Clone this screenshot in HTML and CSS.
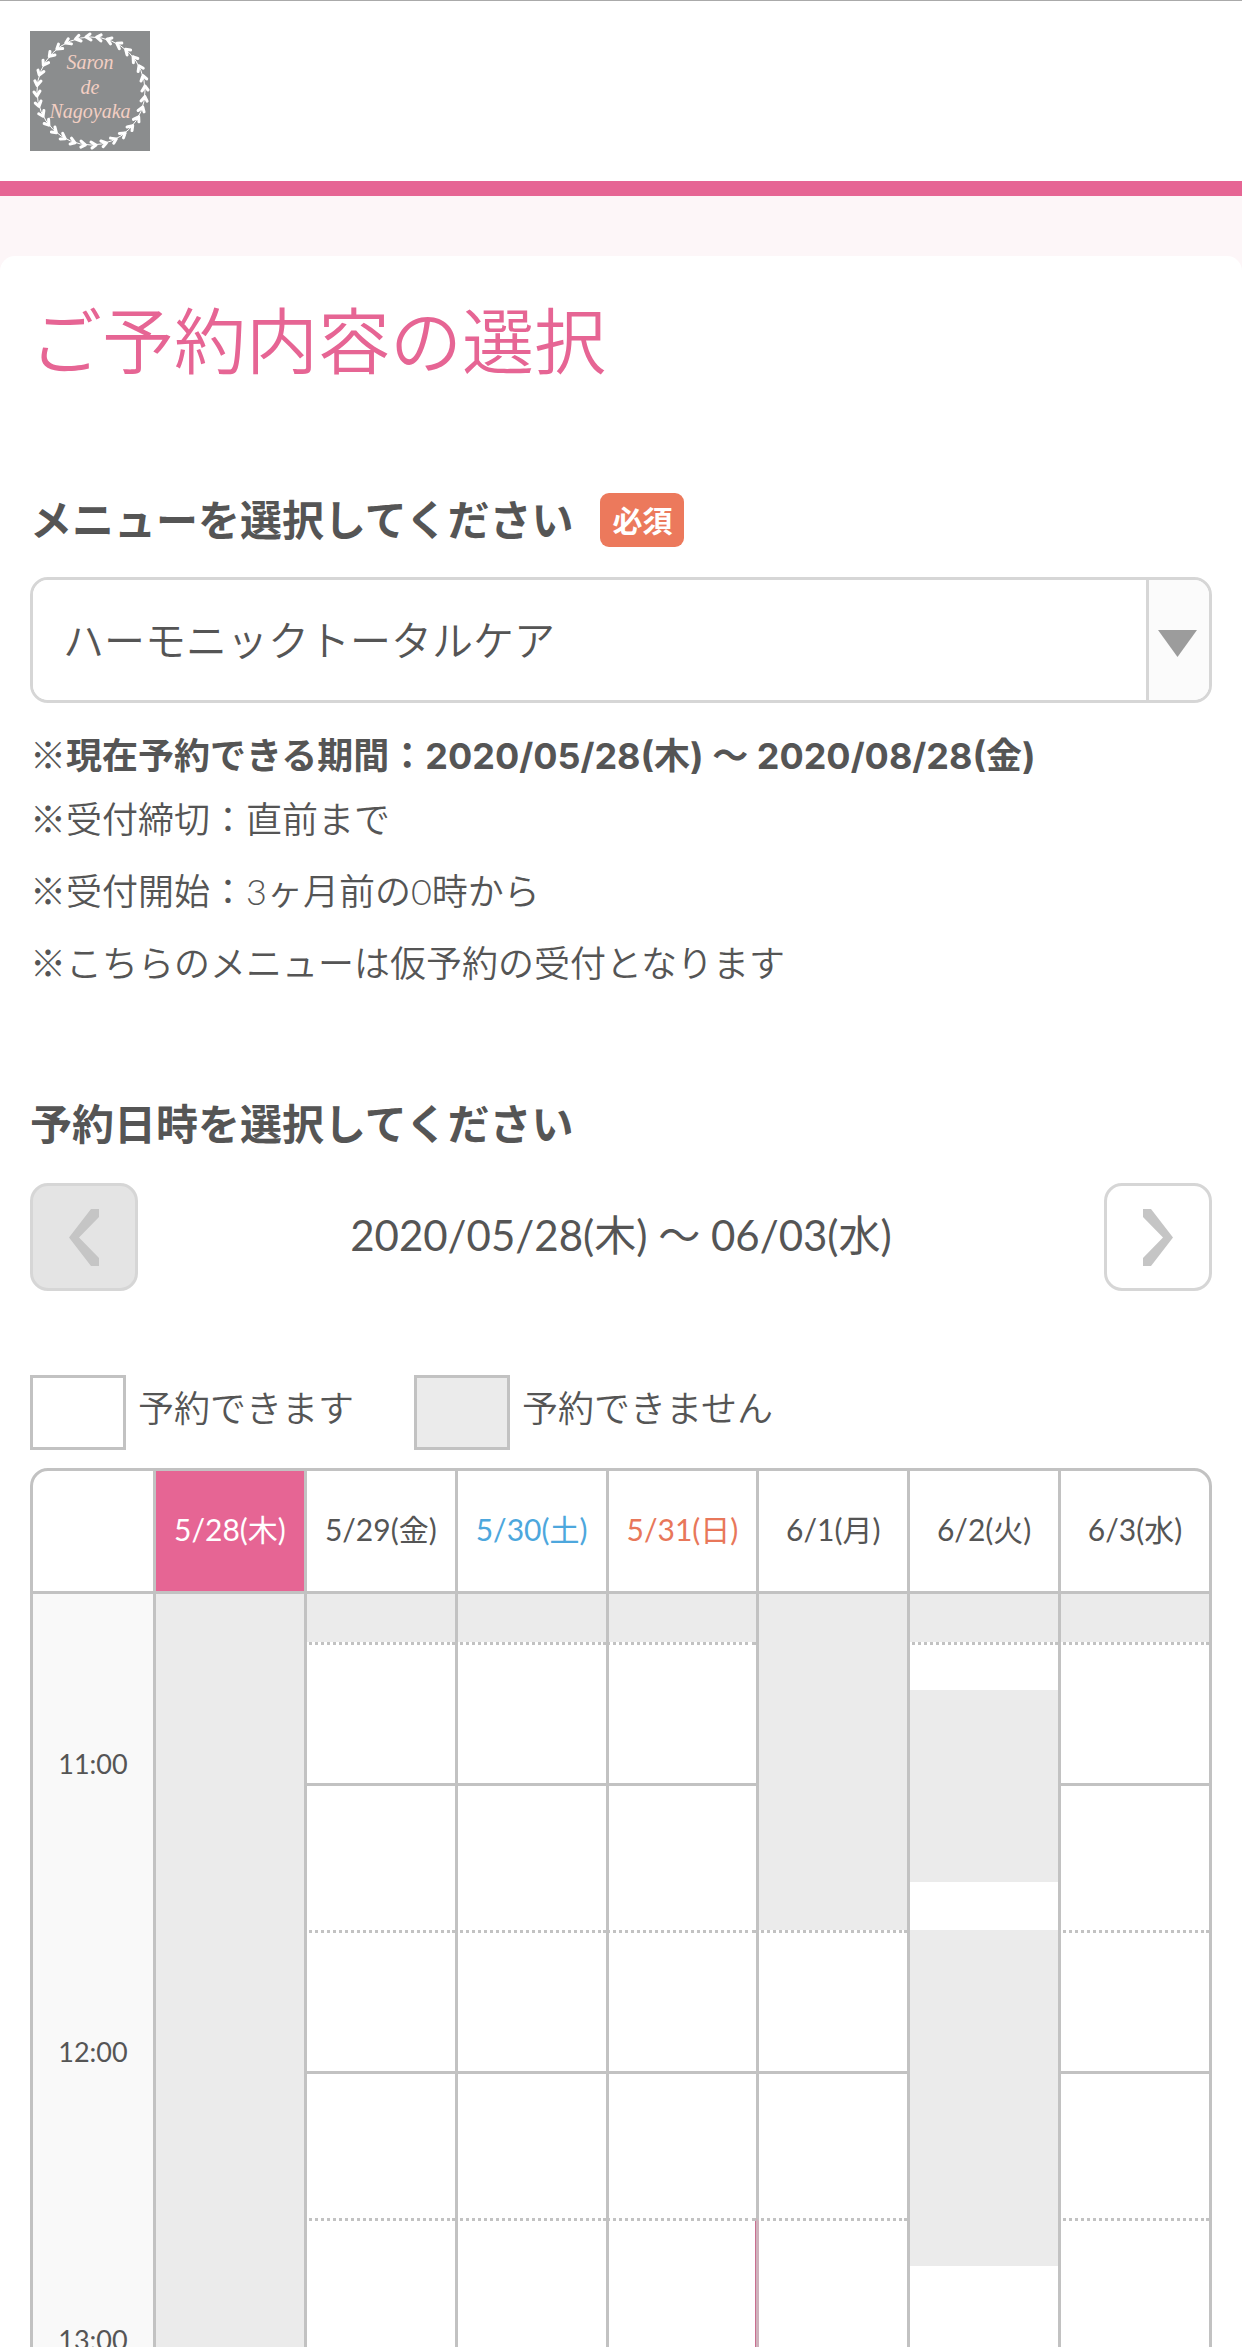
FILE: index.html
```html
<!DOCTYPE html>
<html lang="ja">
<head>
    <meta charset="UTF-8">
    <meta name="viewport" content="width=device-width, initial-scale=1.0">
    <title>ご予約内容の選択</title>
    <link rel="stylesheet" href="styles.css">
</head>
<body>
    <header class="header">
        <a href="#" class="logo">
            <svg width="120" height="120" viewBox="0 0 120 120" role="img" aria-label="Saron de Nagoyaka">
                <defs>
                    <!-- one pair of leaves at the top of the wreath, then eight of them -->
                    <g id="leaf">
                        <path d="M56 6L60 3M56 6L61 9"/>
                    </g>
                    <g id="quarter">
                        <use href="#leaf"/>
                        <use href="#leaf" transform="rotate(11.25 61 60)"/>
                        <use href="#leaf" transform="rotate(22.5 61 60)"/>
                        <use href="#leaf" transform="rotate(33.75 61 60)"/>
                        <use href="#leaf" transform="rotate(45 61 60)"/>
                        <use href="#leaf" transform="rotate(56.25 61 60)"/>
                        <use href="#leaf" transform="rotate(67.5 61 60)"/>
                        <use href="#leaf" transform="rotate(78.75 61 60)"/>
                    </g>
                </defs>
                <rect width="120" height="120" fill="#8b8d8e"/>
                <circle cx="61" cy="60" r="54" fill="none" stroke="#fff" stroke-width="1"/>
                <g fill="none" stroke="#fff" stroke-width="3" stroke-linecap="round">
                    <use href="#quarter"/>
                    <use href="#quarter" transform="rotate(90 61 60)"/>
                    <use href="#quarter" transform="rotate(180 61 60)"/>
                    <use href="#quarter" transform="rotate(270 61 60)"/>
                </g>
                <g class="logo-text">
                    <text x="60" y="38">Saron</text>
                    <text x="60" y="63">de</text>
                    <text x="60" y="87">Nagoyaka</text>
                </g>
            </svg>
        </a>
    </header>

    <main class="content">
        <h1>ご予約内容の選択</h1>

        <section class="menu-section">
            <div class="field-head">
                <label for="menu" class="section-title">メニューを選択してください</label>
                <span class="required">必須</span>
            </div>
            <div class="select-box">
                <select id="menu">
                    <option selected>ハーモニックトータルケア</option>
                </select>
                <span class="select-arrow">
                    <svg width="39" height="27" viewBox="0 0 39 27"><path d="M0 0h39L19.5 27z" fill="#9c9c9c"/></svg>
                </span>
            </div>
            <p class="note period">※<strong>現在予約できる期間：2020/05/28(木) 〜 2020/08/28(金)</strong></p>
            <p class="note">※受付締切：直前まで</p>
            <p class="note">※受付開始：3ヶ月前の0時から</p>
            <p class="note">※こちらのメニューは仮予約の受付となります</p>
        </section>

        <section class="date-section">
            <h2 class="section-title">予約日時を選択してください</h2>
            <div class="week-nav">
                <button type="button" class="nav-button" aria-label="前の週" disabled>
                    <svg width="30" height="57" viewBox="0 0 30 57"><path d="M30 0v8L10 28.5 30 49v8h-8L0 28.500 22 0z" fill="#c5c5c5"/></svg>
                </button>
                <span class="week-range">2020/05/28(木) 〜 06/03(水)</span>
                <button type="button" class="nav-button" aria-label="次の週">
                    <svg width="30" height="57" viewBox="0 0 30 57"><path d="M0 0v8l20 20.500L0 49v8h8L30 28.500 8 0z" fill="#c5c5c5"/></svg>
                </button>
            </div>
            <ul class="legend">
                <li><span class="swatch"></span>予約できます</li>
                <li><span class="swatch closed"></span>予約できません</li>
            </ul>

            <div class="calendar">
                <table>
                    <thead>
                        <tr>
                            <th class="time-col"></th>
                            <th class="today">5/28(木)</th>
                            <th>5/29(金)</th>
                            <th class="sat">5/30(土)</th>
                            <th class="sun">5/31(日)</th>
                            <th>6/1(月)</th>
                            <th>6/2(火)</th>
                            <th>6/3(水)</th>
                        </tr>
                    </thead>
                    <!-- one row = 10 minutes, starting at 10:20 -->
                    <tbody>
                        <tr>
                            <th class="time" rowspan="4">11:00</th>
                            <td class="closed" rowspan="16"></td>
                            <td class="closed"></td>
                            <td class="closed"></td>
                            <td class="closed"></td>
                            <td class="closed" rowspan="7"></td>
                            <td class="closed"></td>
                            <td class="closed"></td>
                        </tr>
                        <tr>
                            <td class="half hour-end" rowspan="3"></td>
                            <td class="half hour-end" rowspan="3"></td>
                            <td class="half hour-end" rowspan="3"></td>
                            <td class="half"></td>
                            <td class="half hour-end" rowspan="3"></td>
                        </tr>
                        <tr>
                            <td class="closed" rowspan="4"></td>
                        </tr>
                        <tr></tr>
                        <tr>
                            <th class="time" rowspan="6">12:00</th>
                            <td rowspan="3"></td>
                            <td rowspan="3"></td>
                            <td rowspan="3"></td>
                            <td rowspan="3"></td>
                        </tr>
                        <tr></tr>
                        <tr>
                            <td></td>
                        </tr>
                        <tr>
                            <td class="half hour-end" rowspan="3"></td>
                            <td class="half hour-end" rowspan="3"></td>
                            <td class="half hour-end" rowspan="3"></td>
                            <td class="half hour-end" rowspan="3"></td>
                            <td class="closed" rowspan="7"></td>
                            <td class="half hour-end" rowspan="3"></td>
                        </tr>
                        <tr></tr>
                        <tr></tr>
                        <tr>
                            <th class="time" rowspan="6">13:00</th>
                            <td rowspan="3"></td>
                            <td rowspan="3"></td>
                            <td rowspan="3"></td>
                            <td rowspan="3"></td>
                            <td rowspan="3"></td>
                        </tr>
                        <tr></tr>
                        <tr></tr>
                        <tr>
                            <td class="half hour-end" rowspan="3"></td>
                            <td class="half hour-end" rowspan="3"></td>
                            <td class="half hour-end marked" rowspan="3"></td>
                            <td class="half hour-end" rowspan="3"></td>
                            <td class="half hour-end" rowspan="3"></td>
                        </tr>
                        <tr>
                            <td rowspan="2"></td>
                        </tr>
                        <tr></tr>
                    </tbody>
                </table>
            </div>
        </section>
    </main>
</body>
</html>
```
FILE: styles.css
```css
* {
    box-sizing: border-box;
}
body {
    height: 100vh;
    margin: 0;
    overflow: hidden;
    background-color: #fdf6f8;
    color: #555;
    font-family: Lato, "Noto Sans CJK JP", sans-serif;
    font-size: 36px;
}
h1, h2, p, ul {
    margin: 0;
    padding: 0;
}
.header {
    padding: 30px;
    background-color: #fff;
    border-top: 1px solid #aaa;
    border-bottom: 15px solid #e66594;
}
.logo, .logo svg {
    display: block;
}
.logo {
    width: 120px;
}
.logo-text {
    fill: #f3cfc3;
    font-family: "Liberation Serif", serif;
    font-size: 20px;
    font-style: italic;
    text-anchor: middle;
}
.content {
    margin-top: 60px;
    padding: 33px 30px 0;
    background-color: #fff;
    border-radius: 15px 15px 0 0;
}
h1 {
    color: #e66594;
    font-size: 72px;
    font-weight: 350;
    line-height: 102px;
}

/* menu */
.menu-section {
    margin-top: 102px;
}
.section-title {
    font-size: 42px;
    font-weight: bold;
    line-height: 54px;
}
.field-head {
    display: flex;
    align-items: center;
    gap: 27px;
    margin-bottom: 30px;
}
.required {
    padding: 0 12px;
    background-color: #ec795c;
    border-radius: 9px;
    color: #fff;
    font-size: 30px;
    font-weight: bold;
    line-height: 54px;
}
.select-box {
    display: flex;
    height: 126px;
    margin-bottom: 25px;
    border: 3px solid #d6d6d6;
    border-radius: 18px;
    overflow: hidden;
}
.select-box select {
    flex: 1;
    padding: 0 30px;
    appearance: none;
    background-color: #fff;
    border: none;
    color: #555;
    font-family: inherit;
    font-size: 41px;
    font-weight: 350;
}
.select-arrow {
    display: flex;
    align-items: center;
    justify-content: center;
    width: 63px;
    padding: 6px 3px 0 0;
    background-color: #fbfbfb;
    border-left: 3px solid #d6d6d6;
}
.note {
    font-weight: 350;
    line-height: 72px;
}
.period {
    line-height: 54px;
}
.period strong {
    font-family: Inter, "Noto Sans CJK JP", sans-serif;
    font-weight: bold;
}

/* week navigation */
.date-section {
    margin-top: 98px;
}
.week-nav {
    display: flex;
    align-items: center;
    justify-content: space-between;
    margin-top: 32px;
}
.week-range {
    padding-bottom: 9px;
    font-size: 42px;
}
.nav-button {
    display: flex;
    align-items: center;
    justify-content: center;
    width: 108px;
    height: 108px;
    padding: 0;
    background-color: #fff;
    border: 3px solid #d6d6d6;
    border-radius: 18px;
}
.nav-button:disabled {
    background-color: #e4e4e4;
}
.legend {
    display: flex;
    gap: 60px;
    margin: 84px 0 18px;
    font-weight: 350;
    line-height: 66px;
    list-style: none;
}
.legend li {
    display: flex;
    gap: 12px;
}
.swatch {
    width: 96px;
    height: 75px;
    border: 3px solid #c2c2c2;
}

/* calendar */
.calendar {
    border: 3px solid #c2c2c2;
    border-radius: 18px 18px 0 0;
    overflow: hidden;
}
.calendar table {
    width: 100%;
    table-layout: fixed;
    border-collapse: separate;
    border-spacing: 0;
}
.calendar th, .calendar td {
    padding: 0;
    font-weight: normal;
}
.calendar td, .calendar th + th {
    border-left: 3px solid #c2c2c2;
}
.calendar thead th {
    height: 123px;
    padding-bottom: 6px;
    border-bottom: 3px solid #c2c2c2;
    font-size: 30px;
}
.calendar .time-col {
    width: 120px;
}
.calendar .today {
    background-color: #e66594;
    color: #fff;
}
.calendar .sat {
    color: #4da7dd;
}
.calendar .sun {
    color: #e8775a;
}
.calendar tbody tr {
    height: 48px;
}
.calendar .time {
    padding-bottom: 7px;
    background-color: #f9f9f9;
    font-size: 27px;
    line-height: 30px;
    vertical-align: bottom;
}
.closed {
    background-color: #ebebeb;
}
.calendar .half {
    border-top: 3px dotted #c2c2c2;
}
.calendar .hour-end {
    border-bottom: 3px solid #c2c2c2;
}
.calendar .marked {
    box-shadow: inset -1px 0 #c96f90;
}
.calendar .marked + td {
    border-left-color: #cfb2bc;
}
```
